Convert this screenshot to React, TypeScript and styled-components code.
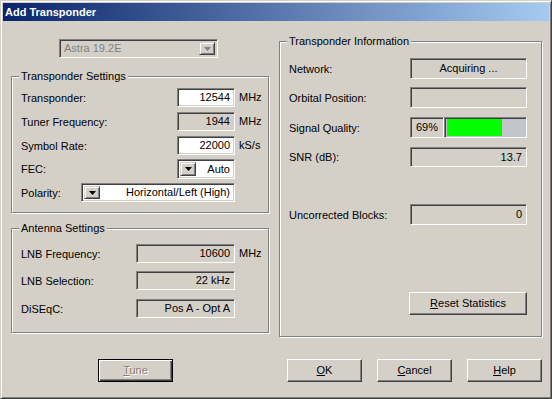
import React from "react";
import styled, { createGlobalStyle } from "styled-components";

const GlobalStyle = createGlobalStyle`
  html, body {
    margin: 0;
    padding: 0;
    background: #d4d0c8;
  }
  * {
    box-sizing: border-box;
  }
`;

const Window = styled.div`
  width: 552px;
  height: 399px;
  background: #d4d0c8;
  border: 1px solid;
  border-color: #d4d0c8 #404040 #404040 #d4d0c8;
  box-shadow: inset 1px 1px #fff, inset -1px -1px #808080;
  padding: 2px;
  font-family: "Liberation Sans", Arial, sans-serif;
  font-size: 11px;
  color: #000;
`;

const TitleBar = styled.div`
  height: 18px;
  background: linear-gradient(to right, #0a246a, #a6caf0);
  color: #fff;
  font-weight: bold;
  font-size: 11px;
  line-height: 18px;
  padding-left: 2px;
`;

const Body = styled.div`
  display: grid;
  grid-template-columns: 258px 263px;
  column-gap: 10px;
  padding: 18px 0 0 8px;
`;

const Column = styled.div`
  display: flex;
  flex-direction: column;
`;

const Group = styled.div<{ $top: number; $pad: string }>`
  position: relative;
  margin-top: ${({ $top }) => $top}px;
  border: 1px solid #808080;
  box-shadow: inset 1px 1px #fff, 1px 1px #fff;
  padding: ${({ $pad }) => $pad};
  display: flex;
  flex-direction: column;
`;

const Legend = styled.span`
  position: absolute;
  top: -7px;
  left: 7px;
  padding: 0 2px;
  line-height: 13px;
  background: #d4d0c8;
`;

const Row = styled.div<{ $h: number; $gap?: number }>`
  display: flex;
  align-items: center;
  height: ${({ $h }) => $h}px;
  margin-top: ${({ $gap }) => $gap ?? 0}px;
`;

const Label = styled.span`
  flex: 1;
  white-space: nowrap;
`;

const Unit = styled.span`
  width: 29px;
  margin-left: 4px;
  white-space: nowrap;
  padding-bottom: 2px;
`;

const Field = styled.div<{ $w: number; $white?: boolean; $align?: string }>`
  width: ${({ $w }) => $w}px;
  height: 100%;
  display: flex;
  align-items: center;
  justify-content: ${({ $align }) => $align ?? "flex-end"};
  padding: 0 4px 1px 4px;
  background: ${({ $white }) => ($white ? "#fff" : "#d4d0c8")};
  border: 1px solid;
  border-color: #808080 #fff #fff #808080;
  box-shadow: inset 1px 1px #404040, inset -1px -1px #d4d0c8;
  white-space: nowrap;
`;

const Combo = styled.div<{ $w: number; $disabled?: boolean }>`
  width: ${({ $w }) => $w}px;
  height: 100%;
  display: flex;
  align-items: stretch;
  padding: 2px;
  background: ${({ $disabled }) => ($disabled ? "#d4d0c8" : "#fff")};
  color: ${({ $disabled }) => ($disabled ? "#808080" : "#000")};
  border: 1px solid;
  border-color: #808080 #fff #fff #808080;
  box-shadow: inset 1px 1px #404040, inset -1px -1px #d4d0c8;
`;

const ComboText = styled.span<{ $align: string }>`
  flex: 1;
  display: flex;
  align-items: center;
  justify-content: ${({ $align }) => $align};
  padding: 0 2px 1px 2px;
  white-space: nowrap;
`;

const DropButton = styled.div`
  width: 16px;
  display: flex;
  align-items: center;
  justify-content: center;
  background: #d4d0c8;
  border: 1px solid;
  border-color: #d4d0c8 #404040 #404040 #d4d0c8;
  box-shadow: inset 1px 1px #fff, inset -1px -1px #808080;
`;

const TopCombo = styled.div`
  height: 19px;
  margin-left: 48px;
  display: flex;
`;

const Meter = styled.div`
  display: flex;
  width: 117px;
  height: 100%;
`;

const Percent = styled(Field)`
  justify-content: flex-start;
  padding-left: 5px;
`;

const Bar = styled.div`
  flex: 1;
  height: 100%;
  padding: 1px;
  background: #c4c4cc;
  border: 1px solid;
  border-color: #808080 #fff #fff #808080;
  box-shadow: inset 1px 1px #404040;
`;

const BarFill = styled.div`
  height: 100%;
  margin-left: 1px;
  background: #00ff00;
`;

const Button = styled.div<{ $w: number; $default?: boolean; $disabled?: boolean }>`
  width: ${({ $w }) => $w}px;
  height: 23px;
  display: flex;
  align-items: center;
  justify-content: center;
  padding-bottom: 1px;
  background: #d4d0c8;
  border: 1px solid;
  border-color: ${({ $default }) =>
    $default ? "#000" : "#fff #404040 #404040 #fff"};
  box-shadow: ${({ $default }) =>
    $default
      ? "inset 1px 1px #fff, inset -1px -1px #404040, inset -2px -2px #808080"
      : "inset -1px -1px #808080"};
  color: ${({ $disabled }) => ($disabled ? "#808080" : "#000")};
  text-shadow: ${({ $disabled }) => ($disabled ? "1px 1px #fff" : "none")};
`;

const Mnemonic = styled.span`
  text-decoration: underline;
`;

const ButtonBar = styled.div`
  display: flex;
  align-items: center;
  margin: 22px 0 0 8px;
`;

const TuneSlot = styled.div`
  margin-left: 87px;
`;

const ButtonGroup = styled.div`
  display: flex;
  gap: 15px;
  margin-left: auto;
  margin-right: 7px;
`;

const Arrow = ({ color = "#000" }: { color?: string }) => (
  <svg width="7" height="4" viewBox="0 0 7 4">
    <polygon points="0,0 7,0 3.5,4" fill={color} />
  </svg>
);

const App = () => {
  const signal = 69;

  return (
    <>
      <GlobalStyle />
      <Window>
        <TitleBar>Add Transponder</TitleBar>
        <Body>
          <Column>
            <TopCombo>
              <Combo $w={159} $disabled>
                <ComboText $align="flex-start">Astra 19.2E</ComboText>
                <DropButton>
                  <Arrow color="#808080" />
                </DropButton>
              </Combo>
            </TopCombo>

            <Group $top={18} $pad="11px 0 10px 9px">
              <Legend>Transponder Settings</Legend>
              <Row $h={19}>
                <Label>Transponder:</Label>
                <Field $w={58} $white>12544</Field>
                <Unit>MHz</Unit>
              </Row>
              <Row $h={19} $gap={5}>
                <Label>Tuner Frequency:</Label>
                <Field $w={58}>1944</Field>
                <Unit>MHz</Unit>
              </Row>
              <Row $h={19} $gap={5}>
                <Label>Symbol Rate:</Label>
                <Field $w={58} $white>22000</Field>
                <Unit>kS/s</Unit>
              </Row>
              <Row $h={20} $gap={4}>
                <Label>FEC:</Label>
                <Combo $w={58}>
                  <DropButton>
                    <Arrow />
                  </DropButton>
                  <ComboText $align="flex-end">Auto</ComboText>
                </Combo>
                <Unit />
              </Row>
              <Row $h={19} $gap={4}>
                <Label>Polarity:</Label>
                <Combo $w={154}>
                  <DropButton>
                    <Arrow />
                  </DropButton>
                  <ComboText $align="flex-end">Horizontal/Left (High)</ComboText>
                </Combo>
                <Unit />
              </Row>
            </Group>

            <Group $top={15} $pad="15px 0 14px 9px">
              <Legend>Antenna Settings</Legend>
              <Row $h={19}>
                <Label>LNB Frequency:</Label>
                <Field $w={99}>10600</Field>
                <Unit>MHz</Unit>
              </Row>
              <Row $h={19} $gap={8}>
                <Label>LNB Selection:</Label>
                <Field $w={99}>22 kHz</Field>
                <Unit />
              </Row>
              <Row $h={19} $gap={9}>
                <Label>DiSEqC:</Label>
                <Field $w={99}>Pos A - Opt A</Field>
                <Unit />
              </Row>
            </Group>
          </Column>

          <Column>
            <Group $top={2} $pad="16px 14px 21px 9px" style={{ flex: 1 }}>
              <Legend>Transponder Information</Legend>
              <Row $h={21}>
                <Label>Network:</Label>
                <Field $w={117} $align="center">Acquiring ...</Field>
              </Row>
              <Row $h={21} $gap={8}>
                <Label>Orbital Position:</Label>
                <Field $w={117} />
              </Row>
              <Row $h={21} $gap={9}>
                <Label>Signal Quality:</Label>
                <Meter>
                  <Percent $w={34}>{signal}%</Percent>
                  <Bar>
                    <BarFill style={{ width: `${signal}%` }} />
                  </Bar>
                </Meter>
              </Row>
              <Row $h={20} $gap={9}>
                <Label>SNR (dB):</Label>
                <Field $w={117}>13.7</Field>
              </Row>
              <Row $h={21} $gap={37}>
                <Label>Uncorrected Blocks:</Label>
                <Field $w={117}>0</Field>
              </Row>
              <Row $h={23} $gap={67}>
                <Label />
                <Button $w={118}>
                  <span>
                    <Mnemonic>R</Mnemonic>eset Statistics
                  </span>
                </Button>
              </Row>
            </Group>
          </Column>
        </Body>

        <ButtonBar>
          <TuneSlot>
            <Button $w={75} $default $disabled>
              <span>
                <Mnemonic>T</Mnemonic>une
              </span>
            </Button>
          </TuneSlot>
          <ButtonGroup>
            <Button $w={75}>
              <span>
                <Mnemonic>O</Mnemonic>K
              </span>
            </Button>
            <Button $w={75}>
              <span>
                <Mnemonic>C</Mnemonic>ancel
              </span>
            </Button>
            <Button $w={75}>
              <span>
                <Mnemonic>H</Mnemonic>elp
              </span>
            </Button>
          </ButtonGroup>
        </ButtonBar>
      </Window>
    </>
  );
};

export default App;
